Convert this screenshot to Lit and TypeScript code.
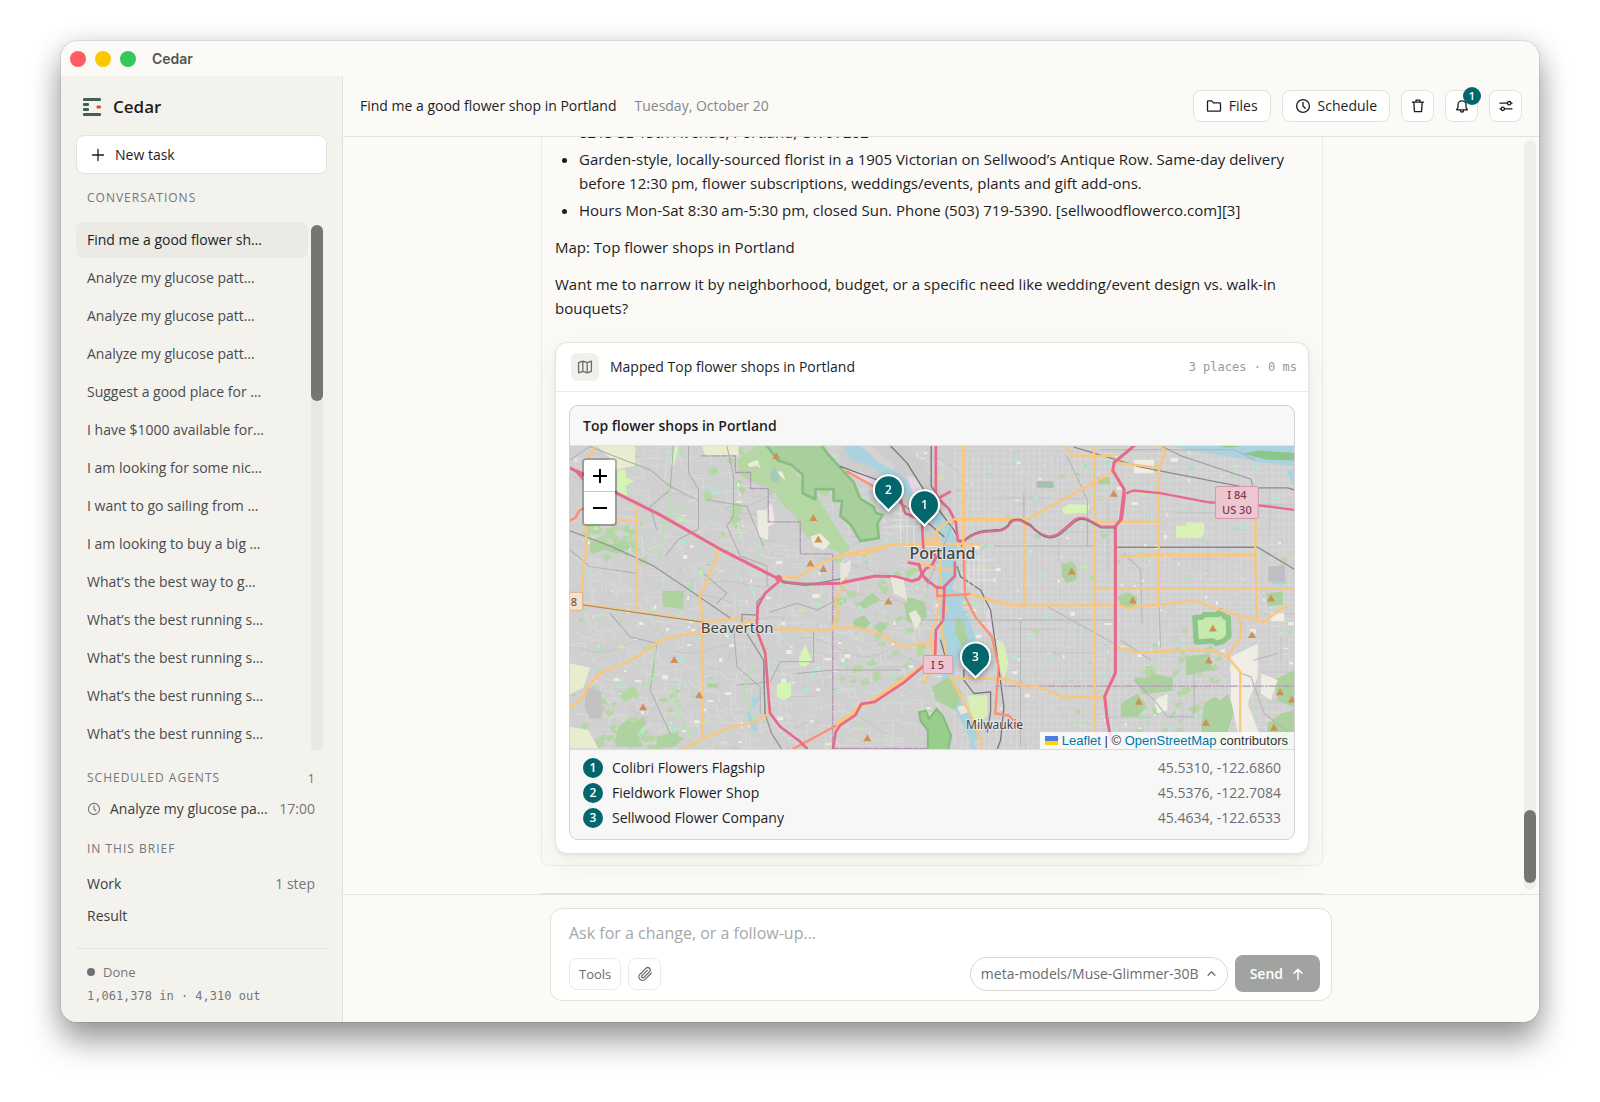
import { LitElement, html, css, svg } from "lit";
import { customElement } from "lit/decorators.js";
import { classMap } from "lit/directives/class-map.js";

const conversations = [
  "Find me a good flower sh…",
  "Analyze my glucose patt…",
  "Analyze my glucose patt…",
  "Analyze my glucose patt…",
  "Suggest a good place for …",
  "I have $1000 available for…",
  "I am looking for some nic…",
  "I want to go sailing from …",
  "I am looking to buy a big …",
  "What’s the best way to g…",
  "What’s the best running s…",
  "What’s the best running s…",
  "What’s the best running s…",
  "What’s the best running s…",
];

const places = [
  { name: "Colibri Flowers Flagship", coords: "45.5310, -122.6860", x: 354, y: 59 },
  { name: "Fieldwork Flower Shop", coords: "45.5376, -122.7084", x: 318, y: 44 },
  { name: "Sellwood Flower Company", coords: "45.4634, -122.6533", x: 405, y: 211 },
];

const icon = (body: unknown, size = 16) => html`<svg
  width=${size} height=${size} viewBox="0 0 16 16" fill="none" stroke="currentColor"
  stroke-width="1.3" stroke-linejoin="round" stroke-linecap="round" aria-hidden="true">${body}</svg>`;

const icons = {
  plus: svg`<path d="M8 2.5v11M2.5 8h11"/>`,
  folder: svg`<path d="M1.5 12.6V3.4q0-.6.6-.6h3.6l1.7 2h6.5q.6 0 .6.6v7.2q0 .6-.6.6H2.1q-.6 0-.6-.6z"/>`,
  clock: svg`<circle cx="8" cy="8" r="6.4"/><path d="M8 4.4V8l2.2 2.2"/>`,
  trash: svg`<path d="M2.4 4.2h11.2M6 4V2.2h4V4M3.8 4.4l.7 9.2h7l.7-9.2"/>`,
  bell: svg`<path d="M2.6 11.8h10.8L12 9.6V6.8a4 4 0 0 0-8 0v2.8z"/><path d="M6.4 12.4a1.6 1.6 0 0 0 3.2 0"/>`,
  sliders: svg`<path d="M2 5.2h7.4M13 5.2h1M2 10.8h1M6.6 10.8H14"/><circle cx="11.2" cy="5.2" r="1.7"/><circle cx="4.8" cy="10.8" r="1.7"/>`,
  map: svg`<path d="M1.6 3.6 5.8 2.2l4.4 1.4 4.2-1.4v10.2l-4.2 1.4-4.4-1.4-4.2 1.4zM5.8 2.2v10.2M10.2 3.6v10.2"/>`,
  clip: svg`<path d="M14.2 7.300 8.100 13.400a3.600 3.600 0 0 1-5.100-5.100l6.200-6.200a2.500 2.500 0 0 1 3.500 3.500l-6.100 6.100a1.300 1.300 0 0 1-1.800-1.800l5.500-5.500"/>`,
  caret: svg`<path d="M3 10.500l5-5 5 5" stroke-width="1.8"/>`,
  up: svg`<path d="M8 14V2.6M3.6 7 8 2.6 12.4 7" stroke-width="1.7"/>`,
};

/* Small deterministic generator so the street texture is the same on each load. */
function seeded(seed: number) {
  return () => {
    seed = (seed * 1664525 + 1013904223) % 4294967296;
    return seed / 4294967296;
  };
}

function buildTexture() {
  const rnd = seeded(41);
  let light = "";
  let mid = "";
  for (let x = 384; x < 723; x += 5 + Math.floor(rnd() * 3)) {
    let y = Math.floor(rnd() * 12);
    while (y < 303) {
      const len = 20 + rnd() * 80;
      light += `M${x} ${y}v${Math.round(len)}`;
      y += len + rnd() * 14;
    }
  }
  for (let y = 3; y < 303; y += 5 + Math.floor(rnd() * 4)) {
    let x = 382 + Math.floor(rnd() * 10);
    while (x < 723) {
      const len = 20 + rnd() * 90;
      light += `M${x} ${y}h${Math.round(len)}`;
      x += len + rnd() * 16;
    }
  }
  for (let i = 0; i < 900; i++) {
    const x = Math.round(rnd() * 370);
    const y = Math.round(rnd() * 303);
    const a = 4 + rnd() * 16;
    const b = 4 + rnd() * 12;
    light += rnd() > 0.5
      ? `M${x} ${y}h${Math.round(a)}v${Math.round(b)}`
      : `M${x} ${y}q${Math.round(a / 2)} ${Math.round(b)} ${Math.round(a)} ${Math.round(b / 2)}`;
  }
  for (let i = 0; i < 60; i++) {
    const x = Math.round(rnd() * 723);
    const y = Math.round(rnd() * 303);
    const a = 20 + Math.round(rnd() * 60);
    if (x > 380) mid += rnd() > 0.5 ? `M${x} ${y}h${a}` : `M${x} ${y}v${a}`;
    else mid += `M${x} ${y}c${a / 3} ${Math.round(rnd() * 20 - 10)} ${a / 2} ${Math.round(rnd() * 40 - 20)} ${a} ${Math.round(rnd() * 40 - 20)}`;
  }
  const tones = ["#a9e3b4", "#aeebc3", "#a8ecd2", "#c2ecb0", "#efede3", "#efede3", "#b3d8a3"];
  const patches = Array.from({ length: 760 }, () => {
    const s = rnd();
    return {
      x: Math.round(rnd() * 720),
      y: Math.round(rnd() * 300),
      w: 1 + Math.round(s * s * 6),
      h: 1 + Math.round(rnd() * 3),
      fill: tones[Math.floor(rnd() * tones.length)],
    };
  });
  const greens = Array.from({ length: 200 }, () => {
    const zone = Math.floor(rnd() * 5);
    const [zx, zy, zw, zh] = [
      [0, 235, 110, 66],
      [260, 110, 95, 130],
      [560, 200, 90, 100],
      [10, 75, 60, 40],
      [130, 0, 120, 90],
    ][zone];
    const x = Math.round(zx + rnd() * zw);
    const y = Math.round(zy + rnd() * zh);
    const a = 3 + Math.round(rnd() * 6);
    return `M${x} ${y}l${a} ${-Math.round(rnd() * 5)}l${Math.round(rnd() * 5)} ${Math.round(a * 0.6)}l${-a} ${Math.round(rnd() * 6)}z`;
  }).join("");
  return { light, mid, patches, greens };
}

const texture = buildTexture();

const peaks = [
  [206, 10], [243, 71.5], [248, 93], [240, 117], [253, 122.5], [318, 155], [104, 213.5], [129, 248.5],
  [73, 260.5], [297, 291.5], [543, 47.5], [501, 125], [562, 154], [642, 182], [681, 188.5], [638, 214],
  [700, 152], [568, 255], [635, 276], [709, 245.5], [721, 253], [703, 281],
];

@customElement("flower-map")
class FlowerMap extends LitElement {
  static styles = css`
    :host { display: block; position: relative; overflow: hidden; }
    .canvas { display: block; width: 100%; height: 303px; background: #d0d0d0; }
    .land, .road, .rail { fill: none; stroke-linecap: round; stroke-linejoin: round; }
    .label { font-family: "Noto Sans", sans-serif; fill: #444; stroke: rgba(255, 255, 255, 0.45); stroke-width: 2px; paint-order: stroke; text-anchor: middle; }
    .shield { font-family: "Noto Sans", sans-serif; font-size: 11px; font-weight: 500; fill: #7c3a50; text-anchor: middle; }
    .shield.state { fill: #7a5a36; }
    .pin-number { font: 600 12px "Open Sans", sans-serif; fill: #fff; text-anchor: middle; }
    .pin { filter: drop-shadow(0 2px 3px rgba(0, 0, 0, 0.35)); }
    .zoom { position: absolute; left: 12px; top: 12px; display: flex; flex-direction: column; border: 2px solid rgba(0, 0, 0, 0.25); border-radius: 4px; background-clip: padding-box; }
    .zoom button { width: 31px; height: 32px; padding: 0; border: 0; background: #fff; color: #000; display: grid; place-items: center; }
    .zoom button:first-child { border-bottom: 1px solid #ccc; border-radius: 2px 2px 0 0; }
    .zoom button:last-child { border-radius: 0 0 2px 2px; }
    .credit { position: absolute; right: 0; bottom: 0; display: flex; align-items: center; gap: 4px; height: 17px; padding: 0 6px 0 5px; background: rgba(255, 255, 255, 0.82); font: 13px/17px "Liberation Sans", Arial, sans-serif; color: #333; }
    .credit a { color: #0078a8; text-decoration: none; }
  `;

  render() {
    return html`
      <svg class="canvas" viewBox="0 0 723 303" preserveAspectRatio="xMidYMid slice" role="img" aria-label="Map of Portland">
        <path class="land" d=${texture.light} stroke="#dbdbdb" stroke-width=".8"/>
        <path class="land" d=${texture.mid} stroke="#bcbcbc" stroke-width=".6"/>
        <path d=${texture.greens} fill="#b4d7a4"/>
        ${texture.patches.map((p) => svg`<rect x=${p.x} y=${p.y} width=${p.w} height=${p.h} fill=${p.fill}/>`)}

        <!-- western half -->
        <g transform="translate(-10 -6) scale(.33333)">
          <path fill="#e9eccf" d="M110 18h115v60l-60 12-20-40zM30 670l60 12-20 60-40 20zM30 860l55 10 30 55H30zM425 18h110v28l-100 2z"/>
          <path fill="#d5f5b4" d="M172 90l24 0 2 22 25 12-28 14 8 30-30-10zM650 735l20-12 14 8 8-8 0 45-22 12-20-10zM716 655l18-42 20 48-20 20-18-8zM330 70l14-50 12 0-16 60z"/>
          <path fill="#aed2a0" d="M306 452h64v56l-60-8zM90 300l60 15 50-10 10 20-40 15-40-10-40 10zM442 730h32v12h-32zM175 860l25-20 20 10 30-20 10 20-30 30 20 40H165zM290 890l50-14 30 20-30 26h-50z"/>
          <path fill="#c2c2c2" d="M75 740l50 15v80H90l-15-30z"/>
          <path fill="#b4d7a4" d="M530 60l60-42h60l60 90 60 60 60 100 40 60-50 30-60-50-70-70-50-90-60-20-40-20z"/>
          <path fill="#d0d0d0" d="M625 215l40-20 40 30 20 60-40-10-30 20-30-20zM770 330l30-10 40 20-30 16z"/>
          <path fill="#eceade" d="M562 72l30-12 8 26-10-8-22 4zM590 210h28l16-20 10 60-20 10v40l-30-10zM640 95l26 0 10 30-14-16-20 6zM750 290l30-10 30 30-20 20-30-10zM840 380l30-20 0 30-20 30z"/>
          <path fill="#a9d09c" stroke="#86bf80" stroke-width="8" stroke-linejoin="round" d="M615 12l38 50 40 13 34 30 0 55 38 18 0-30h55v35h25l-5 45 30 25 15 25 15 25 55-8-4-45 16-25-20-5-8-20-40-24-20-50-74-80-30-40z"/>
          <path fill="#a9d09c" d="M1040 470l50 15 10 45-30 20-26-30zM880 540l30-14 20 24-20 20-30-10z"/>
          <path fill="#aad3df" d="M575 765l14 10 10-14-6 30-20 18zM562 810l20 25 12 40-20-6-14-40z"/>
          <path fill="#a3ccb4" d="M628 100l16-18 16 28-6 20-20-6z"/>
          <path class="land" stroke="#b297b4" stroke-width="4" stroke-dasharray="16 5 4 5" d="M425 48h100v50h46v48h53v100h96v96h97v584M818 925h300"/>
          <path class="rail" stroke="#adadad" stroke-width="3" d="M30 60l60-40 100 40 80 30 60 50 80 40M385 18v80l30 50v120l-60 30-40 50M500 18l20 90 0 120-20 30 40 90 80 30 0 60M430 400l70 60-30 30M340 20l-10 130-60 50 20 70M30 330l60 50 140 20M150 520l60 70 80 20-20 140 60 130M520 560l10 120 70 60 0 80M660 665l100 0 0-90M660 665l-30 60-100 10M710 700l110-10h200M830 480l-60 30-60-20-80 26M440 180l120 20 50 120"/>
          <path class="rail" stroke="#979797" stroke-width="4" d="M30 273l120 45 130 60 90 60 140 96M545 545v-22l45 2 0-40 60-55M560 580l50 80 4 160 20 60 30 47"/>
          <path class="land" stroke="#aee8a4" stroke-width="5" d="M330 150l-8 120M300 340l14-100 40-40M285 620v90l-40 30M340 740l20 90 50 95M580 680l-30 70 30 90"/>
          <path class="road" stroke="#fcc679" stroke-width="7" d="M105 18L70 90M78 250v100l-10 30v110M230 190v322M170 235l20 7h40M475 325l-10 40-48 110 10 50v360M65 492l365 54 110-12M30 802l35-25 20-40 40-40 80-32 100-65 70-17 75-12M580 540l-40 15M640 567l160 4 20-9 70 1 65 16 50 30 30 12 40-10h45M815 567l20-50-10-40 30-50 0-12M660 410l50 4 60-38 70-30 65-2 90-30h125M370 925l60-32 90-35 60-10 40-26M625 775v40"/>
          <path class="rail" stroke="#96876a" stroke-width="3" d="M65 494l365 53"/>
          <path class="road" stroke="#ff8f70" stroke-width="7" d="M30 242l16-8 12-22 14-6M700 925l130-70"/>
          <path class="road" stroke="#fcc679" stroke-width="13" d="M830 850l50-30 20-24 30-8 100-70 60-40"/>
          <path class="road" stroke="#e8698a" stroke-width="9" d="M30 85l40 18 110 62 120 60 190 108 165 84 20 10 60 6 100-3 110-22 60 2 50 13 20-6 20-30 20-12 12-24-4-6"/>
          <path fill="#e8698a" d="M30 80l38 18v24z"/>
          <path class="road" stroke="#e8698a" stroke-width="8" d="M655 425l-40 34-22 40-4 70 26 70 10 130 4 50 30 40 60 45 20 20M818 925l8-50 14-20 45-30 18-34 40-6 90-60 60-50M1045 368l30 6 10 30 20 25"/>
          <circle cx="655" cy="415" r="10" fill="#e8698a"/>
          <path class="rail" stroke="#8d8d8d" stroke-width="4" d="M665 428l70 8 120-22M610 660l4 160"/>
          <rect x="20" y="457" width="48" height="54" rx="5" fill="#f6e2cb" stroke="#d3b18b" stroke-width="3"/>
        </g>

        <!-- river corridor -->
        <g transform="translate(270 -6) scale(.33333)">
          <path fill="#cdcdcd" d="M0 80l100 40 90 80 0 120 110 20 0-200-100-122H0z"/>
          <path fill="#aad3df" d="M10 18h65l30 46 60 30 50 40 40 30 50 56 25 44 18 40 0 110-16 30 40 24-10 30 24 40 20 54-16 50-40 14-10 64 10 20 40 90 20 50-10 30 30 60-40-10 0-60-40-80-46-100 4-90-10-100 0-60-6-50 10-60 6-30-10-60-26-30-60-60-60-60-60-40-60-20z"/>
          <path fill="#d4d4d4" d="M60 18h30l70 60 0 12-20-6-50-40z"/>
          <path fill="#add19e" d="M346 530l20 10 18 60-20 18-20-40z"/>
          <path fill="#e6d6e4" d="M20 90l40 5 60 35 30 25-60-15zM200 110l20 0 30 40 0 40-30-20zM436 520l16-30 10 90-22-10z"/>
          <path fill="#add19e" d="M190 490l40-10 20 30-10 45-40-10zM275 740l50-30 40 50-20 50-60-30zM120 480l-50 26-14-16 40-32zM100 560l20-15 20 15-20 20z"/>
          <path fill="#98cd8c" stroke="#82bd7c" stroke-width="6" d="M236 816l20-5 10 25 22-30 18 20 26 60-10 45h-60l0-60-22-30z"/>
          <path fill="#e9e7db" d="M0 370l30 0-10 40-20 20zM150 410l40 10 10 60-40-20zM205 520l20-10 20 30-20 30zM350 800l30-6 10 20-30 10z"/>
          <path fill="#d8f0b6" d="M380 766l60 0 0 60-30 30-20-40zM470 600l20 10 14 60-14 50-16-50z"/>
          <path class="rail" stroke="#777" stroke-width="4" d="M0 80l40 15 70 25 70 70 60 40 70 60M150 18l50 52 50 80 60 80 30 40 30 60M350 380l10 30 60 40 30 60 20 140 20 150-10 100-30 80M370 690l0 30 30 40 50-5 0 60-10 60M300 600l20 70M272 18v120l40 60"/>
          <path class="land" stroke="#e4e4e4" stroke-width="3" d="M160 220h80M160 240h90M160 260h110M190 320h100M180 200v120M200 200v120M220 210v120M385 330v110M400 330v110M415 330v110M430 330v110M385 360h80M385 390h80M385 420h80"/>
          <path class="road" stroke="#fcc679" stroke-width="7" d="M368 18v320M290 300v-30l40-30h210M245 296h50M245 308h50M0 346l100-20 70-14h245M240 370l50 15 50 5M300 360v120l-10 50-20 50 10 80-30 70M320 500l-20 40 20 120 14 60 60 110 30 80-20 60M330 716h160l50 14M385 462l80 24 75 10"/>
          <path class="road" stroke="#ff8f70" stroke-width="7" d="M20 95l160 90M368 330l6 140 30 60 50 60 20 90-10 140 40 6 40 40M290 468l100-6M290 440v30"/>
          <path class="road" stroke="#e8698a" stroke-width="8" d="M286 18v150l40 40 20 40 6 55 20 0M300 172l28-16M176 165l18 55 50 20 3 60 2 25M235 372l12 36 40 34 20 2 36-36 0-40M312 440l-4 100-22 30-2 80"/>
          <rect x="248" y="646" width="89" height="54" rx="5" fill="#ecc6d0" stroke="#d598a9" stroke-width="3"/>
        </g>

        <!-- eastern half -->
        <g transform="translate(350 -6) scale(.33333)">
          <path fill="#aad3df" d="M760 18h360v62l-100-12-110-20-100-16zM1055 415h40v18h-40zM1098 90h22v50l-14-20z"/>
          <path fill="#8cc78a" d="M965 42l50-10 105 8v22l-80-2zM880 16h100l-60 8z"/>
          <path fill="#add19e" d="M424 375l30-12 14 20v36l-30 10-14-20zM590 470l30-14 30 14-6 34-44-8zM530 112h38v22h-38zM1036 460l50-6 0 40-46 6zM795 650l70-10 10 50-80 16zM850 790l30-20 20 10 20-20 20 50-30 100h-60l-10-50zM640 712h40l20-10 56 10v40l-90 10zM1060 720l60-30v112l-50-20zM1040 850l40-30 40-10v116h-80zM600 790l50-30 24 30-20 40-54 0z"/>
          <path fill="#a6bfae" d="M348 124h50v20h-50z"/>
          <path fill="#d9f3b6" d="M424 205l20-12 66 2-10 24-70 4zM766 258h30v-10h54v34l-10 12h-74z"/>
          <path fill="#c8e9ae" stroke="#8cc78a" stroke-width="16" stroke-linejoin="round" d="M822 532l20 0 8-8 40 0 8-12 14 20 10 0 2 56-18 16-20 6-10-8-50 4z"/>
          <path fill="#efede4" d="M640 60h60v40h-60zM930 650l80-40 0 100-30 80 50 130h-70l-30-140zM700 780l40-20 0 50-30 10zM1050 520l40 0 0 24h-40zM1020 700l50 20-20 60-30-20z"/>
          <path fill="#bfbfc3" d="M1042 380l50-5 0 50h-50z"/>
          <path class="rail" stroke="#b4b4b4" stroke-width="3" d="M222 318h300M0 540h580M310 160v200M300 540v380M380 500l200 110M500 320l0-140-60-130M610 340l50 50 4 160M715 500l4 120M600 600l90 60M960 700l30 10 40 110 90 70M1000 660l70-20M640 720l60 60 40 50 80 0M820 700v120M100 240l-80 200M540 30h400l60 30"/>
          <path class="rail" stroke="#8a8a8a" stroke-width="4" d="M460 22l200 60 320 62h120l20 6M590 322h420l110 66"/>
          <path class="rail" stroke="#999" stroke-width="3" d="M720 18l60 30 150 50 60 20 10 40"/>
          <path class="land" stroke="#b297b4" stroke-width="4" stroke-dasharray="22 6 5 6" d="M225 738h895"/>
          <path class="road" stroke="#fcc679" stroke-width="7" d="M128 18v330M520 18l2 900M310 240l2 250M100 238h220l255-140 10-30 130 16M720 18l14 20-20 50v410M430 18l30 30 120 0M520 246h196M1003 236v110l6 190M590 350l90-4h324M520 444l600 2M150 464l120 32h310M590 494l30 10 200-22 100 36 110 28 50-40 20-6M960 540v50l-40 60-50-20-100 2-120 6-60-16M920 650l38 46 0 230M245 715l80 28 20-6 80 34h130"/>
          <path class="road" stroke="#e8698a" stroke-width="9" d="M640 18l-60 50-4 24 34 56v30l-8 60-18 20 0 440-32 70 6 60 12 70"/>
          <path class="road" stroke="#e8698a" stroke-width="7" d="M618 160l20-8 80 8 150 28h80l172 22M135 300Q160 280 190 276L240 272Q262 266 270 248Q278 238 300 242L330 258Q360 288 385 290Q405 290 420 276L455 246Q475 228 500 238L540 260L585 260M608 160l-10 80"/>
          <path class="rail" stroke="#7a7a7a" stroke-width="3" d="M135 296Q160 276 190 272L240 268Q262 262 266 246Q278 234 300 238L330 254Q360 292 385 294Q405 294 424 280L459 250Q475 232 500 242L540 264L585 264"/>
          <rect x="884" y="140" width="128" height="96" rx="5" fill="#ecc6d0" stroke="#d598a9" stroke-width="3"/>
        </g>

        ${peaks.map(([x, y]) => svg`<path d="M${x - 4} ${y + 3.5}h8l-4-7z" fill="#d08f55"/>`)}

        <text class="label" x="372" y="113" font-size="16" font-weight="500">Portland</text>
        <text class="label" x="167" y="187" font-size="15">Beaverton</text>
        <text class="label" x="424" y="283" font-size="12">Milwaukie</text>
        <text class="shield" x="666" y="53">I 84</text>
        <text class="shield" x="666" y="68">US 30</text>
        <text class="shield" x="367" y="223">I 5</text>
        <text class="shield state" x="4" y="160">8</text>

        ${[1, 0, 2].map((i) => svg`
          <g class="pin" transform="translate(${places[i].x} ${places[i].y})">
            <path d="M0 22 -11 11A15.6 15.6 0 1 1 11 11Z" fill="#fff"/>
            <path d="M0 19 -9.5 9.6A13.5 13.5 0 1 1 9.5 9.6Z" fill="#03666c"/>
            <text class="pin-number" y="4">${i + 1}</text>
          </g>`)}
      </svg>
      <div class="zoom">
        <button type="button" aria-label="Zoom in"><svg width="14" height="14" viewBox="0 0 14 14" stroke="#000" stroke-width="2"><path d="M7 0v14M0 7h14"/></svg></button>
        <button type="button" aria-label="Zoom out"><svg width="14" height="14" viewBox="0 0 14 14" stroke="#000" stroke-width="2"><path d="M0 7h14"/></svg></button>
      </div>
      <div class="credit">
        <svg width="13" height="9" viewBox="0 0 13 9" aria-hidden="true"><path fill="#4c7be1" d="M0 0h13v5H0z"/><path fill="#ffd500" d="M0 5h13v4H0z"/></svg>
        <span><a href="#leaflet">Leaflet</a> | © <a href="#osm">OpenStreetMap</a> contributors</span>
      </div>
    `;
  }
}

@customElement("app-root")
class AppRoot extends LitElement {
  static styles = css`
    :host {
      --ink: #1d1d1f;
      --muted: #74767a;
      --line: #e4e2dc;
      --teal: #03666c;
      --mono: "DejaVu Sans Mono", monospace;
      display: flex; box-sizing: border-box; height: 100vh; padding: 41px 61px 80px; overflow: hidden;
      background: #fff; color: var(--ink);
      font: 14px/20px "Open Sans", "Noto Sans", sans-serif;
    }
    * { box-sizing: border-box; }
    button, input { font: inherit; color: inherit; margin: 0; }
    h1, h2, h3, p, ul, ol { margin: 0; padding: 0; font-size: inherit; font-weight: inherit; }
    svg { flex: none; display: block; }

    .window { flex: 1; min-width: 0; display: flex; flex-direction: column; border-radius: 16px; overflow: hidden; background: #fbfaf6; }
    .frame { flex: 1; min-width: 0; display: flex; border-radius: 16px; box-shadow: 0 0 1px rgba(0, 0, 0, 0.7), 0 20px 32px rgba(0, 0, 0, 0.34), 0 4px 28px rgba(0, 0, 0, 0.16); }
    .titlebar { flex: none; height: 35px; display: flex; align-items: center; gap: 9px; padding-left: 9px; font: 600 14px/20px Inter, sans-serif; color: #555553; }
    .light { width: 16px; height: 16px; border-radius: 50%; }
    .light.close { background: #ff5b60; }
    .light.minimize { background: #fbc800; }
    .light.zoom { background: #34c759; }
    .titlebar h1 { margin-left: 7px; }
    .panes { flex: 1; min-height: 0; display: flex; }

    .sidebar { flex: none; width: 282px; display: flex; flex-direction: column; padding: 0 15px 16px; border-right: 1px solid var(--line); background: #f3f2ed; }
    .brand { height: 59px; display: flex; align-items: center; gap: 11px; padding: 3px 0 0 6px; font-size: 17px; font-weight: 600; }
    .new-task { height: 39px; display: flex; align-items: center; gap: 9px; padding: 0 13px; border: 1px solid var(--line); border-radius: 8px; background: #fff; font-weight: 500; }
    .label { display: flex; justify-content: space-between; padding: 0 12px 0 11px; font-size: 12px; line-height: 20px; letter-spacing: 1px; color: var(--muted); }
    .label b { font-weight: 400; letter-spacing: 0; font-size: 13px; }
    .label.first { margin-top: 14px; }
    .label.agents { margin-top: 17px; }
    .label.brief { margin-top: 18px; }
    .history { flex: 1; min-height: 0; display: flex; gap: 3px; margin-top: 14px; padding-right: 4px; overflow: hidden; }
    .history ul { flex: 1; min-width: 0; display: flex; flex-direction: column; gap: 2px; list-style: none; }
    .history button { width: 100%; height: 36px; padding: 0 11px; border: 0; border-radius: 8px; background: none; text-align: left; color: #4a4b4d; white-space: nowrap; }
    .history button.current { background: #ebeae5; color: var(--ink); font-weight: 500; }
    .track { flex: none; width: 12px; display: flex; flex-direction: column; border-radius: 6px; background: #e8e7e2; }
    .thumb { border-radius: 6px; background: #767570; }
    .history .track { margin-top: 3px; }
    .history .thumb { height: 176px; }
    .agent { height: 24px; display: flex; align-items: center; margin-top: 9px; padding: 0 12px 0 11px; color: var(--muted); }
    .agent span { flex: 1; margin-left: 9px; color: #3c3d3f; white-space: nowrap; }
    .steps { display: flex; flex-direction: column; margin-top: 9px; list-style: none; }
    .steps li { height: 32px; display: flex; align-items: center; justify-content: space-between; padding: 0 12px 0 11px; color: var(--muted); }
    .steps a { color: #3c3d3f; text-decoration: none; }
    .status { margin-top: 16px; padding: 13px 11px 0; border-top: 1px solid var(--line); color: var(--muted); font-size: 13px; display: flex; flex-direction: column; gap: 4px; }
    .status div { display: flex; align-items: center; gap: 8px; }
    .status i { width: 8px; height: 8px; border-radius: 50%; background: #6d7074; }
    .status code { font: 12px/20px var(--mono); }

    .main { flex: 1; min-width: 0; display: flex; flex-direction: column; }
    .topbar { flex: none; height: 61px; display: flex; align-items: center; padding: 0 17px; border-bottom: 1px solid var(--line); }
    .topbar h2 { font-weight: 500; }
    .topbar time { margin-left: 18px; color: #85868a; }
    .actions { margin-left: auto; display: flex; gap: 11px; }
    .action { position: relative; height: 32px; min-width: 33px; display: flex; align-items: center; justify-content: center; gap: 6px; padding: 0 7px; border: 1px solid var(--line); border-radius: 8px; background: #fff; font-weight: 500; }
    .action.wide { padding: 0 12px; gap: 7px; }
    .badge { position: absolute; right: -4px; top: -4px; width: 18px; height: 18px; border-radius: 50%; background: var(--teal); color: #fff; font-size: 11px; line-height: 18px; font-weight: 600; text-align: center; }

    .scroll { flex: 1; min-height: 0; display: flex; overflow: hidden; }
    .thread { flex: 1; min-width: 0; display: flex; flex-direction: column; justify-content: flex-end; align-items: center; }
    .bar { flex: none; display: flex; padding: 3px 3px 4px; }
    .bar .track { background: #efeeea; justify-content: flex-end; padding-bottom: 7px; }
    .bar .thumb { height: 73px; }
    .message { flex: none; width: 100%; max-width: 782px; padding: 14px 13px 11px; border: 1px solid #edece7; border-radius: 8px; font-size: 15px; line-height: 24px; }
    .message ul { padding-left: 24px; display: flex; flex-direction: column; gap: 3px; }
    .message p { margin-top: 13px; }
    .next { flex: none; width: 100%; max-width: 782px; height: 1px; margin-top: 27px; background: var(--line); }

    .tool { margin-top: 22px; border: 1px solid var(--line); border-radius: 12px; background: #fff; box-shadow: 0 2px 4px rgba(60, 50, 20, 0.06), 0 8px 28px rgba(60, 50, 20, 0.07); font-size: 14px; line-height: 20px; }
    .tool header { height: 49px; display: flex; align-items: center; gap: 11px; padding: 0 11px 0 15px; border-bottom: 1px solid #ebebe8; }
    .tool header h3 { font-weight: 500; }
    .tool-icon { width: 28px; height: 28px; display: grid; place-items: center; border-radius: 7px; background: #f0efea; color: #6b6c6e; }
    .tool code { margin-left: auto; font: 12px/20px var(--mono); color: #98999b; }
    .card { margin: 13px; border: 1px solid #d2d2d2; border-radius: 9px; overflow: hidden; background: #f7f7f7; }
    .card h3 { height: 40px; padding: 0 13px; line-height: 40px; font-weight: 600; border-bottom: 1px solid #e2e2e2; }
    .card ol { display: flex; flex-direction: column; gap: 5px; padding: 8px 13px 11px; border-top: 1px solid #dcdcdc; list-style: none; }
    .card li { display: flex; align-items: center; gap: 9px; }
    .num { width: 20px; height: 20px; border-radius: 50%; background: var(--teal); color: #fff; font-size: 12px; font-weight: 600; text-align: center; }
    .coords { margin-left: auto; color: #6d6e72; }

    .composer { flex: none; display: flex; justify-content: center; padding: 13px 0 21px; border-top: 1px solid var(--line); }
    .box { width: 100%; max-width: 782px; display: flex; flex-direction: column; gap: 10px; padding: 12px 11px 8px 18px; border: 1px solid var(--line); border-radius: 12px; background: #fff; }
    .box input { width: 100%; height: 24px; padding: 0; border: 0; outline: 0; background: none; font-size: 16px; }
    .box input::placeholder { color: #a6a7a9; opacity: 1; }
    .tools { display: flex; align-items: center; gap: 7px; color: #6b6c70; }
    .tools button { display: flex; align-items: center; justify-content: center; border: 1px solid #ebeae6; border-radius: 8px; background: #fff; height: 32px; }
    .tools .small { padding: 0 9px; font-size: 13px; }
    .tools .clip { width: 33px; padding: 0; }
    .tools .model { margin-left: auto; height: 34px; gap: 7px; padding: 0 10px; border-color: #d9d8d4; border-radius: 17px; }
    .tools .send { height: 37px; gap: 8px; padding: 0 15px; border: 0; background: #a1a3a1; color: #fff; font-weight: 600; }
  `;

  render() {
    return html`
      <div class="frame"><div class="window">
        <div class="titlebar">
          <span class="light close"></span><span class="light minimize"></span><span class="light zoom"></span>
          <h1>Cedar</h1>
        </div>
        <div class="panes">
          <nav class="sidebar">
            <div class="brand">
              <svg width="20" height="20" viewBox="0 0 20 20" aria-hidden="true">
                <g fill="#3f6350"><rect x="1" y="1" width="18" height="3" rx="1"/><rect x="1" y="6" width="6" height="3" rx="1"/><rect x="1" y="11" width="6" height="3" rx="1"/><rect x="1" y="16" width="18" height="3" rx="1"/></g>
                <rect x="14.5" y="8.5" width="4.5" height="3" rx="1" fill="#c05a3c"/>
              </svg>
              Cedar
            </div>
            <button class="new-task" type="button">${icon(icons.plus)} New task</button>
            <h2 class="label first">CONVERSATIONS</h2>
            <div class="history">
              <ul>
                ${conversations.map((title, i) => html`<li><button type="button" class=${classMap({ current: i === 0 })}>${title}</button></li>`)}
              </ul>
              <div class="track"><div class="thumb"></div></div>
            </div>
            <h2 class="label agents">SCHEDULED AGENTS <b>1</b></h2>
            <div class="agent">${icon(icons.clock, 14)}<span>Analyze my glucose pa…</span>17:00</div>
            <h2 class="label brief">IN THIS BRIEF</h2>
            <ul class="steps">
              <li><a href="#work">Work</a>1 step</li>
              <li><a href="#result">Result</a></li>
            </ul>
            <div class="status">
              <div><i></i>Done</div>
              <code>1,061,378 in · 4,310 out</code>
            </div>
          </nav>

          <main class="main">
            <header class="topbar">
              <h2>Find me a good flower shop in Portland</h2>
              <time>Tuesday, October 20</time>
              <div class="actions">
                <button class="action wide" type="button">${icon(icons.folder)}Files</button>
                <button class="action wide" type="button">${icon(icons.clock)}Schedule</button>
                <button class="action" type="button" aria-label="Delete">${icon(icons.trash)}</button>
                <button class="action" type="button" aria-label="Notifications">${icon(icons.bell)}<span class="badge">1</span></button>
                <button class="action" type="button" aria-label="Settings">${icon(icons.sliders)}</button>
              </div>
            </header>

            <div class="scroll">
              <div class="thread">
                <article class="message">
                  <ul>
                    <li><br />8213 SE 13th Avenue, Portland, OR 97202</li>
                    <li>Garden-style, locally-sourced florist in a 1905 Victorian on Sellwood’s Antique Row. Same-day delivery before 12:30 pm, flower subscriptions, weddings/events, plants and gift add-ons.</li>
                    <li>Hours Mon-Sat 8:30 am-5:30 pm, closed Sun. Phone (503) 719-5390. [sellwoodflowerco.com][3]</li>
                  </ul>
                  <p>Map: Top flower shops in Portland</p>
                  <p>Want me to narrow it by neighborhood, budget, or a specific need like wedding/event design vs. walk-in bouquets?</p>
                  <section class="tool">
                    <header>
                      <span class="tool-icon">${icon(icons.map)}</span>
                      <h3>Mapped Top flower shops in Portland</h3>
                      <code>3 places · 0 ms</code>
                    </header>
                    <div class="card">
                      <h3>Top flower shops in Portland</h3>
                      <flower-map></flower-map>
                      <ol>
                        ${places.map((p, i) => html`<li><span class="num">${i + 1}</span>${p.name}<span class="coords">${p.coords}</span></li>`)}
                      </ol>
                    </div>
                  </section>
                </article>
                <div class="next"></div>
              </div>
              <div class="bar"><div class="track"><div class="thumb"></div></div></div>
            </div>

            <form class="composer" @submit=${(e: Event) => e.preventDefault()}>
              <div class="box">
                <input type="text" aria-label="Message" placeholder="Ask for a change, or a follow-up…" />
                <div class="tools">
                  <button class="small" type="button">Tools</button>
                  <button class="clip" type="button" aria-label="Attach file">${icon(icons.clip)}</button>
                  <button class="model" type="button" aria-haspopup="listbox">meta-models/Muse-Glimmer-30B ${icon(icons.caret, 11)}</button>
                  <button class="send" type="submit">Send ${icon(icons.up, 14)}</button>
                </div>
              </div>
            </form>
          </main>
        </div>
      </div></div>
    `;
  }
}
